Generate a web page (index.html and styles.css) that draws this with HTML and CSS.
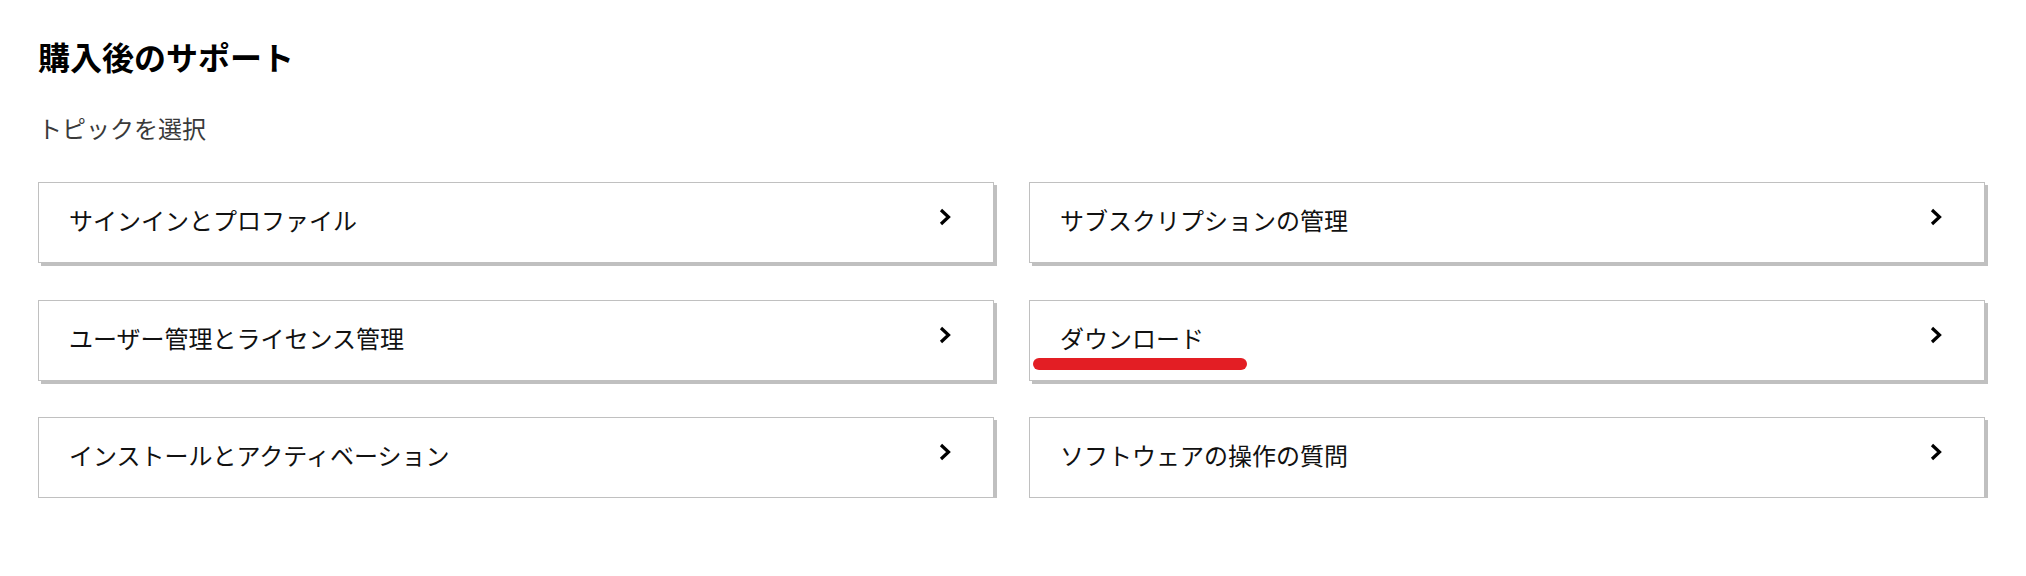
FILE: index.html
```html
<!DOCTYPE html>
<html lang="ja">

<head>
    <meta charset="UTF-8">
    <meta name="viewport" content="width=device-width, initial-scale=1.0">
    <title>購入後のサポート</title>
    <link rel="stylesheet" href="styles.css">
</head>

<body>
    <div class="page">
        <h1 class="title">購入後のサポート</h1>
        <p class="lead">トピックを選択</p>

        <div class="topics">
            <a class="topic" href="#">
                <span class="topic-label">サインインとプロファイル</span>
                <svg class="chevron" viewBox="0 0 12 18"><polyline points="2,2 9.5,9 2,16" /></svg>
            </a>
            <a class="topic" href="#">
                <span class="topic-label">サブスクリプションの管理</span>
                <svg class="chevron" viewBox="0 0 12 18"><polyline points="2,2 9.5,9 2,16" /></svg>
            </a>
            <a class="topic" href="#">
                <span class="topic-label">ユーザー管理とライセンス管理</span>
                <svg class="chevron" viewBox="0 0 12 18"><polyline points="2,2 9.5,9 2,16" /></svg>
            </a>
            <a class="topic topic-marked" href="#">
                <span class="topic-label">ダウンロード</span>
                <svg class="chevron" viewBox="0 0 12 18"><polyline points="2,2 9.5,9 2,16" /></svg>
                <!-- 赤い下線（注釈） -->
                <span class="marker"></span>
            </a>
            <a class="topic" href="#">
                <span class="topic-label">インストールとアクティベーション</span>
                <svg class="chevron" viewBox="0 0 12 18"><polyline points="2,2 9.5,9 2,16" /></svg>
            </a>
            <a class="topic" href="#">
                <span class="topic-label">ソフトウェアの操作の質問</span>
                <svg class="chevron" viewBox="0 0 12 18"><polyline points="2,2 9.5,9 2,16" /></svg>
            </a>
        </div>
    </div>
</body>

</html>
```

FILE: styles.css
```css
* {
    margin: 0;
    padding: 0;
    box-sizing: border-box;
}

body {
    font-family: "Noto Sans CJK JP", "Noto Sans", sans-serif;
    background: #fff;
    color: #111;
}

.page {
    padding: 36px 42px 0 38px;
}

.title {
    font-size: 32px;
    line-height: 40px;
    font-weight: 700;
    color: #000;
}

.lead {
    margin-top: 36px;
    font-size: 24px;
    line-height: 32px;
    color: #3a3a3a;
}

.topics {
    margin-top: 38px;
    display: grid;
    grid-template-columns: 956px 956px;
    column-gap: 35px;
    row-gap: 36.5px;
}

.topic {
    position: relative;
    height: 81px;
    display: flex;
    align-items: center;
    justify-content: space-between;
    padding: 0 42px 5px 30px;
    border: 1px solid #c0c0c0;
    box-shadow: 3px 3px 0 #c0c0c0;
    color: #111;
    text-decoration: none;
    font-size: 24px;
    line-height: 32px;
}

.chevron {
    width: 12px;
    height: 18px;
    margin-bottom: 6px;
    fill: none;
    stroke: #000;
    stroke-width: 3.2;
}

.marker {
    position: absolute;
    left: 3px;
    top: 57px;
    width: 214px;
    height: 12px;
    border-radius: 6px;
    background: #e31e24;
}
```
